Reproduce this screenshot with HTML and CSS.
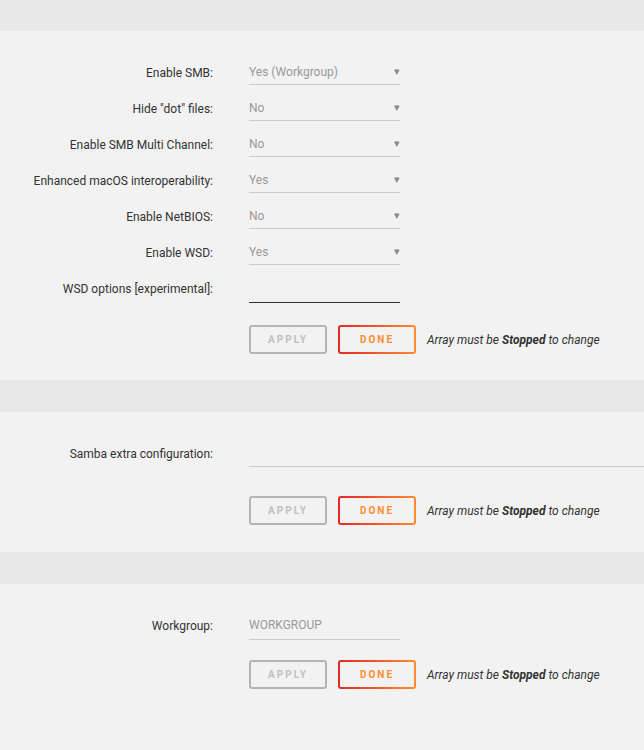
FILE: index.html
```html
<!DOCTYPE html>
<html lang="en">

<head>
    <meta charset="UTF-8">
    <meta name="viewport" content="width=device-width, initial-scale=1.0">
    <title>SMB Settings</title>

    <link rel="stylesheet" href="styles.css">
</head>

<body>

    <div class="band"></div>
    <form class="panel">
        <div class="row">
            <label class="row__label">Enable SMB:</label>
            <div class="select">Yes (Workgroup)</div>
        </div>
        <div class="row">
            <label class="row__label">Hide "dot" files:</label>
            <div class="select">No</div>
        </div>
        <div class="row">
            <label class="row__label">Enable SMB Multi Channel:</label>
            <div class="select">No</div>
        </div>
        <div class="row">
            <label class="row__label">Enhanced macOS interoperability:</label>
            <div class="select">Yes</div>
        </div>
        <div class="row">
            <label class="row__label">Enable NetBIOS:</label>
            <div class="select">No</div>
        </div>
        <div class="row">
            <label class="row__label">Enable WSD:</label>
            <div class="select">Yes</div>
        </div>
        <div class="row">
            <label class="row__label">WSD options [experimental]:</label>
            <div class="text text--focus"></div>
        </div>
        <div class="actions">
            <button type="button" class="btn btn--apply">Apply</button>
            <button type="button" class="btn btn--done">Done</button>
            <span class="note">Array must be <b>Stopped</b> to change</span>
        </div>
    </form>

    <div class="band"></div>
    <form class="panel panel--extra">
        <div class="row">
            <label class="row__label">Samba extra configuration:</label>
            <div class="textarea"></div>
        </div>
        <div class="actions">
            <button type="button" class="btn btn--apply">Apply</button>
            <button type="button" class="btn btn--done">Done</button>
            <span class="note">Array must be <b>Stopped</b> to change</span>
        </div>
    </form>

    <div class="band"></div>
    <form class="panel panel--last">
        <div class="row">
            <label class="row__label">Workgroup:</label>
            <div class="text">WORKGROUP</div>
        </div>
        <div class="actions">
            <button type="button" class="btn btn--apply">Apply</button>
            <button type="button" class="btn btn--done">Done</button>
            <span class="note">Array must be <b>Stopped</b> to change</span>
        </div>
    </form>

</body>

</html>
```

FILE: styles.css
```css
* {
    box-sizing: border-box;
}

body {
    margin: 0;
    background: #f2f2f2;
    color: #333;
    font-family: Roboto, "Liberation Sans", sans-serif;
    font-size: 12px;
}

.band {
    height: 32px;
    background: #e8e8e8;
}

.band:first-child {
    height: 31px;
}

.panel {
    padding: 24px 0 26px;
}

.panel--extra {
    padding-bottom: 27px;
}

.panel--last {
    padding-bottom: 62px;
}

.row {
    display: flex;
    align-items: center;
    height: 36px;
}

.row__label {
    flex: 0 0 213px;
    text-align: right;
}

.select,
.text {
    position: relative;
    align-self: flex-start;
    width: 151px;
    height: 22px;
    margin: 8px 0 0 36px;
    padding-top: 2px;
    border-bottom: 1px solid #ccc;
    color: #999;
}

.text {
    height: 24px;
}

/* small caret at the right end of the dropdowns */
.select::after {
    content: "\25BE";
    position: absolute;
    right: 0;
    top: 2px;
    font-size: 11px;
    color: #888;
}

.text--focus {
    border-bottom-color: #333;
}

.textarea {
    flex: 1;
    align-self: flex-start;
    height: 27px;
    margin: 4px 0 0 36px;
    border-bottom: 1px solid #ccc;
}

.actions {
    display: flex;
    align-items: center;
    gap: 11px;
    margin: 18px 0 0 249px;
}

.panel--extra .actions {
    margin-top: 24px;
}

.panel--last .actions {
    margin-top: 16px;
}

.btn {
    width: 78px;
    height: 29px;
    border: 2px solid transparent;
    border-radius: 3px;
    font: 700 10px Roboto, sans-serif;
    letter-spacing: 2px;
    text-transform: uppercase;
    cursor: pointer;
}

.btn--apply {
    background: #f2f2f2;
    border-color: #b4b4b4;
    color: #c0c0c0;
}

.btn--done {
    background:
        linear-gradient(#f2f2f2, #f2f2f2) padding-box,
        linear-gradient(90deg, #e22828, #ff8c2f) border-box;
    color: #ff8c2f;
}

.note {
    font-style: italic;
}

.note b {
    font-weight: 700;
}
```
